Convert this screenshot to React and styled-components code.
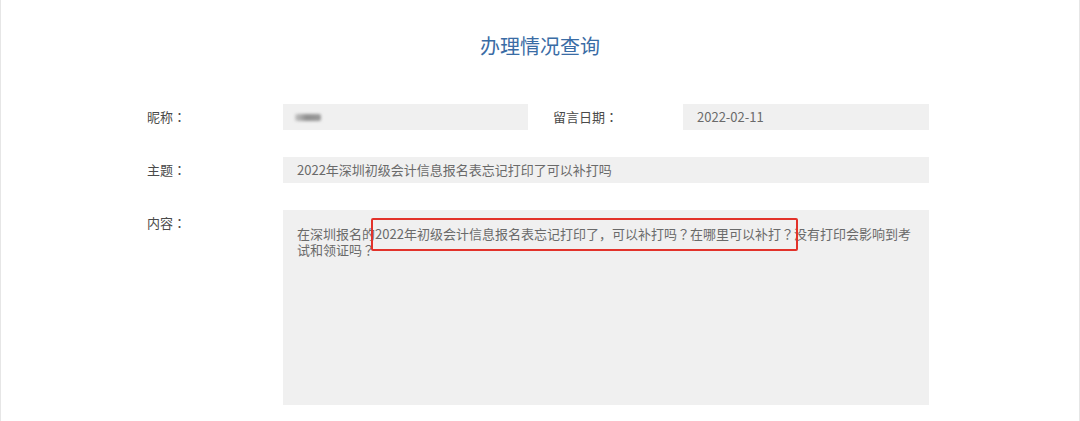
import React from "react";
import styled, { createGlobalStyle } from "styled-components";

const Global = createGlobalStyle`
  html, body { margin: 0; padding: 0; background: #fff; }
  body { font-family: "Microsoft YaHei", "Noto Sans CJK SC", "Noto Sans", sans-serif; }
  * { box-sizing: border-box; }
`;

const Page = styled.div`
  width: 1080px;
  min-height: 421px;
  border-left: 1px solid #e6e6e6;
  border-right: 1px solid #e6e6e6;
  background: #fff;
  overflow: hidden;
`;

const Title = styled.h1`
  margin: 0;
  padding-top: 32px;
  height: 104px;
  text-align: center;
  font-size: 20px;
  line-height: 28px;
  font-weight: 400;
  color: #3a6ca5;
`;

const Form = styled.div`
  display: flex;
  flex-direction: column;
  gap: 27px;
  padding-left: 146px;
`;

const Row = styled.div`
  display: flex;
  align-items: flex-start;
`;

const Label = styled.div`
  width: ${(p) => p.$w || 136}px;
  flex-shrink: 0;
  font-size: 13px;
  line-height: 26px;
  color: #4a4a4a;
`;

const Field = styled.div`
  width: ${(p) => p.$w}px;
  height: ${(p) => p.$h || 26}px;
  background: #f0f0f0;
  padding: 0 14px;
  font-size: 13px;
  line-height: 26px;
  color: #6a6a6a;
  white-space: nowrap;
  display: flex;
  align-items: center;
`;

const Gap = styled.div`
  width: 25px;
  flex-shrink: 0;
`;

const Blur = styled.span`
  display: inline-block;
  width: 26px;
  height: 7px;
  margin-left: -2px;
  background: linear-gradient(90deg, #c4c4c4, #8f8f8f 45%, #9a9a9a);
  border-radius: 2px;
  filter: blur(1.5px);
`;

const TextArea = styled.div`
  width: 646px;
  height: 195px;
  background: #f0f0f0;
  padding: 16px 10px 0 14px;
  font-size: 13px;
  line-height: 16px;
  color: #6a6a6a;
  word-break: break-all;
`;

const Punct = styled.span`
  font-family: "Noto Sans CJK JP", "Noto Sans CJK SC", sans-serif;
`;

const Mark = styled.span`
  position: relative;
  &::after {
    content: "";
    position: absolute;
    left: -4px;
    right: -4px;
    top: -6px;
    bottom: -8px;
    border: 2px solid #e2322a;
    border-radius: 2px;
    pointer-events: none;
  }
`;

export default function App() {
  return (
    <>
      <Global />
      <Page>
        <Title>办理情况查询</Title>
        <Form>
          <Row>
            <Label>昵称<Punct>：</Punct></Label>
            <Field $w={245}>
              <Blur />
            </Field>
            <Gap />
            <Label $w={130}>留言日期<Punct>：</Punct></Label>
            <Field $w={246}>2022-02-11</Field>
          </Row>
          <Row>
            <Label>主题<Punct>：</Punct></Label>
            <Field $w={646}>2022年深圳初级会计信息报名表忘记打印了可以补打吗</Field>
          </Row>
          <Row>
            <Label>内容<Punct>：</Punct></Label>
            <TextArea>
              在深圳报名的<Mark>2022年初级会计信息报名表忘记打印了，可以补打吗<Punct>？</Punct>在哪里可以补打<Punct>？</Punct></Mark>没有打印会影响到考试和领证吗<Punct>？</Punct>
            </TextArea>
          </Row>
        </Form>
      </Page>
    </>
  );
}
